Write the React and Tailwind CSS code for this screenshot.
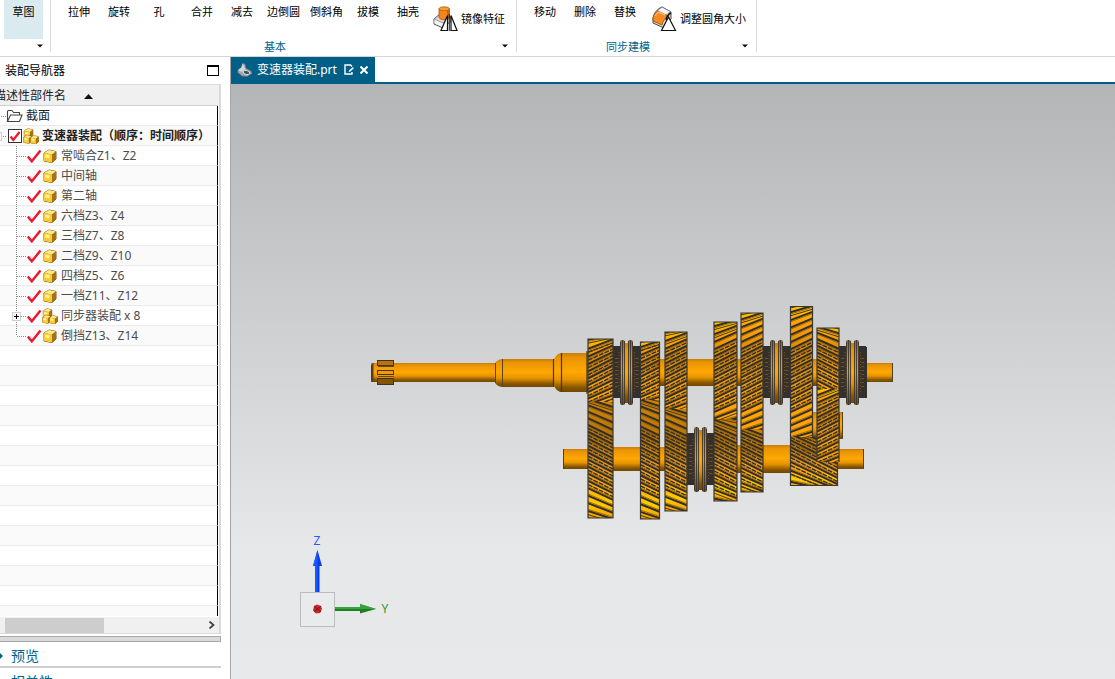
import React from "react";

const FONT = "font-['Noto_Sans','Noto_Sans_CJK_SC',sans-serif]";

/* ---------- icons ---------- */

function Caret({ className = "" }) {
  return (
    <svg width="6" height="4" viewBox="0 0 6 4" className={className} aria-hidden="true">
      <path d="M0 0.5h6L3 3.6z" fill="#111" />
    </svg>
  );
}

function MirrorIcon() {
  return (
    <svg width="26" height="26" viewBox="0 0 26 26" aria-hidden="true">
      <path d="M2 13 9 7l10 4v4l-8 7-9-4z" fill="#dcdcdc" stroke="#555" strokeWidth="1" />
      <path d="M2 13l9 4 8-6" fill="none" stroke="#888" />
      <path d="M2.500 13.500l8.500 4V21l-8.500-3.500z" fill="#f3f3f3" />
      <path d="M7 2.500v9c1 3 9 3 10.500 0v-9z" fill="#f58516" stroke="#a65308" strokeWidth="0.800" />
      <path d="M15 4v9l2.500-1.500v-9z" fill="#c7640a" />
      <ellipse cx="12.200" cy="2.800" rx="5.200" ry="2" fill="#f99b35" stroke="#b5600d" strokeWidth="0.800" />
      <path d="M15.500 9.500v15H9z" fill="#fff" stroke="#111" strokeWidth="1.200" />
      <path d="M19 9.500v15h6z" fill="#fff" stroke="#111" strokeWidth="1.200" />
      <path d="M17.300 8v17" stroke="#111" strokeWidth="0.900" />
    </svg>
  );
}

function FilletIcon() {
  return (
    <svg width="26" height="26" viewBox="0 0 26 26" aria-hidden="true">
      <path d="M2 12C3 7 6 3 11 1l9 5v7l-7 9L2 17z" fill="#d8d8d8" stroke="#4b4b4b" />
      <path d="M11 1l9 5c-3 1-4 2-5 4L6 5z" fill="#f4f4f4" stroke="#666" strokeWidth="0.700" />
      <path d="M2 12c1-3 2-5 5-7l10 5c-3 2-5 5-6 9l-9-4z" fill="#f58a1f" stroke="#9b4c0a" strokeWidth="0.800" />
      <path d="M4 10c1-2 2-3 4-4l6 3" fill="none" stroke="#ffb765" strokeWidth="1.400" />
      <path d="M17.500 11l7 13.500h-14z" fill="#fff" stroke="#111" strokeWidth="1.200" />
      <path d="M15 14q1-5 5-7" fill="none" stroke="#111" strokeWidth="1.500" />
    </svg>
  );
}

function Cube({ x, y, s }) {
  return (
    <g transform={`translate(${x} ${y}) scale(${s})`}>
      <path d="M1 4 6 1l7 1.500V10l-4 3.500L1 12z" fill="#b07d10" stroke="#6f4d06" strokeWidth="0.900" />
      <path d="M1 4l5-3 7 1.500L9 5.500z" fill="#ffe98a" />
      <path d="M1 4l8 1.500v8L1 12z" fill="#fbcb32" />
      <path d="M2.200 5.400l4.300.8v3l-4.300-.8z" fill="#fff0a6" />
      <path d="M9 5.500l4-3V10l-4 3.500z" fill="#a97210" />
    </g>
  );
}

function PartIcon() {
  return (
    <svg width="14" height="14" viewBox="0 0 14 14" aria-hidden="true">
      <Cube x={0} y={0} s={1} />
    </svg>
  );
}

function AssemblyIcon() {
  return (
    <svg width="16" height="16" viewBox="0 0 16 16" aria-hidden="true">
      <Cube x={0.5} y={0} s={0.72} />
      <Cube x={0} y={6.5} s={0.66} />
      <Cube x={7} y={7} s={0.66} />
    </svg>
  );
}

function FolderIcon() {
  return (
    <svg width="17" height="14" viewBox="0 0 17 14" aria-hidden="true">
      <path d="M1.500 12.500V2.500q0-1 1-1h3.500l1.500 2h6v2.500M1.500 12.500l3-6.500H16l-2.500 6.500z" fill="none" stroke="#444" strokeWidth="1.100" />
    </svg>
  );
}

function RedCheck({ boxed }) {
  return boxed ? (
    <svg width="14" height="14" viewBox="0 0 14 14" className="pointer-events-none col-start-1 row-start-1 opacity-0 peer-checked:opacity-100" aria-hidden="true">
      <path d="M2.500 7.500l2.800 3.500L11.500 3" fill="none" stroke="#f5142e" strokeWidth="2.200" />
    </svg>
  ) : (
    <svg width="15" height="14" viewBox="0 0 15 14" className="pointer-events-none col-start-1 row-start-1 opacity-0 peer-checked:opacity-100" aria-hidden="true">
      <path d="M0.800 7.500l4 4.800L13.500 1.500" fill="none" stroke="#f5142e" strokeWidth="2.400" />
    </svg>
  );
}

/* ---------- ribbon ---------- */

function RibbonButton({ children, wide }) {
  return (
    <button className={`${wide ? "w-[43px]" : "w-10"} h-10 shrink-0 pt-1 text-center flex justify-center items-start hover:bg-[#daebf0]`}>
      {children}
    </button>
  );
}

function RibbonGroup({ title, children, className }) {
  return (
    <section className={`flex h-13 shrink-0 flex-col justify-between border-r border-[#d9d9d9] ${className}`}>
      <div className="flex">{children}</div>
      <div className="flex h-3 items-center">
        <h2 className="flex-1 pt-px text-center text-[#00648b]">{title}</h2>
        <button className="flex h-3 w-[17px] items-center pl-[3px]" aria-label={`${title}选项`}>
          <Caret />
        </button>
      </div>
    </section>
  );
}

function Ribbon() {
  return (
    <header className="flex h-[57px] shrink-0 items-start overflow-hidden border-b border-[#d5d5d5] bg-white text-[11px] leading-4 text-black">
      <div className="flex h-13 w-[51px] shrink-0 flex-col justify-between border-r border-[#d9d9d9] pl-1">
        <button className="flex h-[39px] w-[39px] items-start justify-center bg-[#daebf0] pt-1">草图</button>
        <button className="flex h-3 w-[39px] items-center justify-end" aria-label="草图选项">
          <Caret />
        </button>
      </div>
      <RibbonGroup title="基本" className="w-[466px]">
        <div className="flex pl-2">
          <RibbonButton>拉伸</RibbonButton>
          <RibbonButton>旋转</RibbonButton>
          <RibbonButton>孔</RibbonButton>
        </div>
        <div className="flex pl-[3px]">
          <RibbonButton>合并</RibbonButton>
          <RibbonButton>减去</RibbonButton>
          <RibbonButton wide>边倒圆</RibbonButton>
          <RibbonButton wide>倒斜角</RibbonButton>
          <RibbonButton>拔模</RibbonButton>
          <RibbonButton>抽壳</RibbonButton>
        </div>
        <button className="ml-1 flex h-9 items-center gap-[3px] pt-[2px]">
          <MirrorIcon />
          镜像特征
        </button>
      </RibbonGroup>
      <RibbonGroup title="同步建模" className="w-[240px]">
        <div className="flex pl-2">
          <RibbonButton>移动</RibbonButton>
          <RibbonButton>删除</RibbonButton>
          <RibbonButton>替换</RibbonButton>
        </div>
        <button className="ml-[6px] flex h-9 items-center gap-[3px] pt-[2px]">
          <FilletIcon />
          调整圆角大小
        </button>
      </RibbonGroup>
    </header>
  );
}

/* ---------- assembly navigator ---------- */

const PARTS = [
  { name: "常啮合Z1、Z2" },
  { name: "中间轴" },
  { name: "第二轴" },
  { name: "六档Z3、Z4" },
  { name: "三档Z7、Z8" },
  { name: "二档Z9、Z10" },
  { name: "四档Z5、Z6" },
  { name: "一档Z11、Z12" },
  { name: "同步器装配 x 8", assembly: true },
  { name: "倒挡Z13、Z14", last: true },
];

function Row({ children }) {
  return (
    <tr className="even:bg-[#fafafa]">
      <td className="border-b border-[#ebebeb] p-0">
        <div className="flex h-[19px] items-center whitespace-nowrap">{children}</div>
      </td>
    </tr>
  );
}

function Branch({ last, expandable }) {
  return (
    <svg width="27" height="20" viewBox="0 0 27 20" className="-mb-px shrink-0" aria-hidden="true">
      <path d={last ? "M16.500 0v10" : "M16.500 0v20"} stroke="#8a8a8a" strokeDasharray="1 1" />
      <path d="M17 10.500h9" stroke="#8a8a8a" strokeDasharray="1 1" />
      {expandable && (
        <g>
          <rect x="12.500" y="6.500" width="8" height="8" fill="#fff" stroke="#cfcfcf" />
          <path d="M14 10.500h5M16.500 8v5" stroke="#000" />
        </g>
      )}
    </svg>
  );
}

function Navigator() {
  return (
    <aside className="flex w-[231px] shrink-0 flex-col border-r border-[#a5a5a5] bg-white pr-[9px] text-xs">
      <div className="flex h-[27px] shrink-0 items-center justify-between pl-[5px] pr-[2px] text-black">
        <h1>装配导航器</h1>
        <button className="h-[11px] w-3 border border-t-2 border-black" aria-label="最大化" />
      </div>
      <div className="flex min-h-0 flex-1 flex-col border-y border-r-2 border-[#dadada]">
        <div className="min-h-0 flex-1 overflow-hidden bg-[linear-gradient(#f0f0f0_20px,#fff_20px)] pr-px">
          <table className="w-full border-separate border-spacing-0">
            <thead>
              <tr>
                <th className="border-b border-[#cfcfcf] bg-[#f0f0f0] p-0 text-left font-normal text-[#222]">
                  <button className="-ml-[6px] flex h-5 items-center gap-[18px] whitespace-nowrap pt-[2px]">
                    描述性部件名
                    <svg width="9" height="5" viewBox="0 0 9 5" aria-hidden="true">
                      <path d="M0 5 4.500 0 9 5z" fill="#111" />
                    </svg>
                  </button>
                </th>
              </tr>
            </thead>
            <tbody className="[&_td]:border-r [&_td]:border-r-black text-[#4c4c4c]">
              <Row>
                <svg width="6" height="19" viewBox="0 0 6 19" aria-hidden="true">
                  <path d="M1 10.500h5" stroke="#8a8a8a" strokeDasharray="1 1" />
                </svg>
                <FolderIcon />
                <span className="pl-[3px] text-[#222]">截面</span>
              </Row>
              <Row>
                <svg width="8" height="19" viewBox="0 0 8 19" aria-hidden="true">
                  <path d="M0 6.500h1.500v8H0" fill="none" stroke="#cfcfcf" />
                  <path d="M3 10.500h4" stroke="#8a8a8a" strokeDasharray="1 1" />
                </svg>
                <label className="flex items-center font-bold text-[#222]">
                  <span className="grid">
                    <input type="checkbox" defaultChecked className="peer col-start-1 row-start-1 h-[14px] w-[14px] appearance-none border border-[#333] bg-white" />
                    <RedCheck boxed />
                  </span>
                  <span className="pl-px pr-[3px]">
                    <AssemblyIcon />
                  </span>
                  变速器装配（顺序：时间顺序）
                </label>
              </Row>
              {PARTS.map((part) => (
                <Row key={part.name}>
                  <Branch last={part.last} expandable={part.assembly} />
                  <label className="flex items-center">
                    <span className="grid">
                      <input type="checkbox" defaultChecked className="peer col-start-1 row-start-1 h-[14px] w-[15px] appearance-none" />
                      <RedCheck />
                    </span>
                    <span className={`flex w-[19px] ${part.assembly ? "" : "pl-px"}`}>{part.assembly ? <AssemblyIcon /> : <PartIcon />}</span>
                    {part.name}
                  </label>
                </Row>
              ))}
              {Array.from({ length: 40 }, (_, i) => (
                <Row key={i} />
              ))}
            </tbody>
          </table>
        </div>
        <div className="flex h-[17px] shrink-0 items-center justify-between border-t border-white bg-[#f0f0f0] pl-[5px] pr-1">
          <div className="h-[15px] w-[99px] bg-[#cdcdcd]" />
          <button aria-label="向右滚动">
            <svg width="7" height="8" viewBox="0 0 7 8" aria-hidden="true">
              <path d="M1.500 0.500 5.500 4l-4 3.500" fill="none" stroke="#444" strokeWidth="1.800" />
            </svg>
          </button>
        </div>
      </div>
      <div className="mt-[2px] h-[6px] shrink-0 border border-l-0 border-[#a9a9a9] bg-[#dadada]" />
      <div className="h-[37px] shrink-0 overflow-hidden text-sm leading-6 text-[#00648b]">
        {["预览", "相关性"].map((name) => (
          <button key={name} className="flex h-[26px] w-full items-center gap-2 border-b-2 border-[#cfcfcf] pt-1 text-left">
            <svg width="3" height="6" viewBox="0 0 3 6" aria-hidden="true">
              <path d="M0 0l3 3-3 3z" fill="#00648b" />
            </svg>
            {name}
          </button>
        ))}
      </div>
    </aside>
  );
}

/* ---------- gearbox drawing ---------- */

function Shaft({ x1, x2, y1, y2 }) {
  return (
    <rect x={x1} y={y1} width={x2 - x1} height={y2 - y1} fill="url(#shaft)" />
  );
}

/* One toothed face. dir 1 leans "/", dir -1 leans "\"; cy is the gear's axis, r its radius. */
function Teeth({ id, x, w, top, bottom, cy, r, dir, fill }) {
  const teeth = [];
  const line = (key, y, dy, rise, props) =>
    teeth.push(<path key={key} d={`M${x} ${y + dy + rise / 2}L${x + w} ${y + dy - rise / 2}`} {...props} />);
  for (let y = cy - 140; y < bottom + 14; y += 7) {
    if (y < top - 14) continue;
    const near = Math.abs(y - cy);
    const c = Math.sqrt(1 - Math.min(1, near / r) ** 2);
    const rise = w * (0.22 + 0.3 * c) * dir;
    line(`t${y}`, y, 0, rise, { stroke: "#302d2a", strokeWidth: 2 });
    line(`s${y}`, y, y < cy ? 1.7 : -1.7, rise, { stroke: "#8a5a06", strokeWidth: 0.8 });
    if (near <= 30) {
      line(`f${y}`, y, 3.6, rise, { stroke: "#302d2a", strokeWidth: 1.4, strokeDasharray: "5 1" });
    }
    if (near < 11) {
      line(`h${y}`, y, 5.3, rise, { stroke: "#ffc681", strokeWidth: 0.9, strokeDasharray: "2 1" });
    }
    if (near > r - 9) {
      line(`e${y}`, y, 3.5, rise, { stroke: "#4a3a16", strokeWidth: 1 });
    }
  }
  return (
    <g>
      <clipPath id={id}>
        <rect x={x} y={top} width={w} height={bottom - top} />
      </clipPath>
      <g clipPath={`url(#${id})`}>
        <rect x={x} y={top} width={w} height={bottom - top} fill={`url(#${fill})`} />
        {teeth}
      </g>
    </g>
  );
}

function GearPair({ id, x, w, top, mesh, bottom, lowerW = w }) {
  return (
    <g>
      <Teeth id={`${id}a`} x={x} w={w} top={top} bottom={mesh} cy={372} r={372 - top} dir={1} fill="upper" />
      <Teeth id={`${id}b`} x={x} w={lowerW} top={mesh} bottom={bottom} cy={459} r={Math.max(bottom - 459, 459 - mesh)} dir={-1} fill="lower" />
      <path
        d={`M${x} ${top}H${x + w}V${mesh}H${x + lowerW}V${bottom}H${x}Z`}
        fill="none"
        stroke="#3a3733"
        strokeWidth="1.200"
      />
    </g>
  );
}

function Synchronizer({ x, cy, w = 27 }) {
  const m = x + w / 2;
  return (
    <g>
      <rect x={x} y={cy - 26} width={w} height="52" fill="#33302e" />
      <path d={`M${x + 3.500} ${cy - 14}v30M${m + 10.500} ${cy - 14}v30`} stroke="#7b5212" strokeWidth="3" strokeDasharray="1 3" />
      <path d={`M${x + 6} ${cy - 20}v40M${m + 8} ${cy - 20}v40`} stroke="#76501a" strokeWidth="1" strokeDasharray="1 2" />
      <rect x={m - 6.500} y={cy - 32} width="5" height="65" rx="2" fill="url(#ring)" />
      <rect x={m + 1.500} y={cy - 32} width="5" height="65" rx="2" fill="url(#ring)" />
      <path
        d={`M${m - 6} ${cy - 30}v61M${m - 4} ${cy - 32}v65M${m - 2} ${cy - 31}v63M${m + 2} ${cy - 31}v63M${m + 4} ${cy - 32}v65M${m + 6} ${cy - 30}v61`}
        stroke="#3a3733"
        strokeWidth="0.900"
      />
      <rect x={m - 1.5} y={cy - 29} width="3" height="60" fill="url(#shaft)" />
    </g>
  );
}

function Model() {
  return (
    <svg viewBox="231 84 884 595" className="h-full w-full" role="img" aria-label="变速器装配">
      <defs>
        <linearGradient id="shaft" x1="0" y1="0" x2="0" y2="1">
          <stop offset="0" stopColor="#c87e0a" />
          <stop offset="0.120" stopColor="#ea9403" />
          <stop offset="0.480" stopColor="#ffa803" />
          <stop offset="0.680" stopColor="#e69400" />
          <stop offset="0.880" stopColor="#8a5700" />
          <stop offset="1" stopColor="#704700" />
        </linearGradient>
        <linearGradient id="ring" x1="0" y1="0" x2="0" y2="1">
          <stop offset="0" stopColor="#8f6420" />
          <stop offset="0.250" stopColor="#d58b10" />
          <stop offset="0.500" stopColor="#ee9c10" />
          <stop offset="0.750" stopColor="#b0710c" />
          <stop offset="1" stopColor="#6b4710" />
        </linearGradient>
        <linearGradient id="upper" x1="0" y1="0" x2="0" y2="1">
          <stop offset="0" stopColor="#ffc400" />
          <stop offset="0.120" stopColor="#ffa208" />
          <stop offset="0.350" stopColor="#d58806" />
          <stop offset="0.550" stopColor="#e8960a" />
          <stop offset="0.750" stopColor="#ffa408" />
          <stop offset="1" stopColor="#ffa305" />
        </linearGradient>
        <linearGradient id="lower" x1="0" y1="0" x2="0" y2="1">
          <stop offset="0" stopColor="#d08405" />
          <stop offset="0.300" stopColor="#b47306" />
          <stop offset="0.550" stopColor="#ea9818" />
          <stop offset="0.700" stopColor="#ffa50a" />
          <stop offset="0.880" stopColor="#ffcc00" />
          <stop offset="1" stopColor="#f09c00" />
        </linearGradient>
      </defs>

      {/* input shaft */}
      <Shaft x1={371} x2={497} y1={363} y2={382} />
      <path d="M373 363q-2 1-2 4v11q0 3 2 4z" fill="#7b4f07" />
      <path d="M373 363v19M371.500 365v15" stroke="#4a3a22" strokeWidth="1" />
      <rect x="377" y="360" width="17" height="25" fill="url(#shaft)" />
      <g fill="#b97409" stroke="#453518" strokeWidth="1">
        <rect x="377.500" y="360.500" width="16" height="5" />
        <rect x="377.500" y="370.500" width="16" height="4" fill="#ee9a0b" />
        <rect x="377.500" y="378.500" width="16" height="6" fill="#845509" />
      </g>
      <path d="M378 366.500h16M378 376.500h16" stroke="#704700" />
      <path d="M495 363q3-4 8-4h51v28h-51q-5 0-8-4z" fill="url(#shaft)" />
      <path d="M495.500 363v20M502.500 359v28" stroke="#5b4318" strokeWidth="1" />
      <path d="M554 359q3-6 8-6h26v39h-26q-5 0-8-6z" fill="url(#shaft)" />
      <path d="M553.500 359v28M561.500 353v39M587 351v43" stroke="#40351f" strokeWidth="1.200" />

      {/* main shaft */}
      <Shaft x1={613} x2={839} y1={359} y2={386} />
      <Shaft x1={866} x2={893} y1={363} y2={382} />
      <path d="M892.500 363v19" stroke="#50422a" />

      {/* countershaft */}
      <Shaft x1={563} x2={588} y1={449} y2={469} />
      <path d="M563.500 449v20" stroke="#50422a" />
      <Shaft x1={613} x2={665} y1={447} y2={471} />
      <Shaft x1={737} x2={792} y1={445} y2={473} />
      <Shaft x1={838} x2={864} y1={449} y2={469} />
      <path d="M863.500 449v20" stroke="#50422a" />

      {/* reverse idler */}
      <Shaft x1={813} x2={843} y1={412} y2={439} />
      <path d="M842.500 412v27M839.500 414v23" stroke="#50422a" />

      <Synchronizer x={613} cy={372} />
      <Synchronizer x={687} cy={459} />
      <Synchronizer x={763} cy={372} />
      <Synchronizer x={839} cy={372} w={27} />
      <rect x="864" y="347" width="3" height="51" fill="#33302e" />

      <GearPair id="g1" x={588} w={25} top={339} mesh={402} bottom={518} />
      <GearPair id="g2" x={640.5} w={19} top={342} mesh={400} bottom={519} />
      <GearPair id="g3" x={665} w={22} top={332} mesh={409} bottom={511} />
      <GearPair id="g4" x={714} w={23} top={322} mesh={419} bottom={501} />
      <GearPair id="g5" x={741} w={22} top={313} mesh={429} bottom={492} />
      <GearPair id="g6" x={790.5} w={22} top={306.5} mesh={437} bottom={485.5} lowerW={47} />
      <Teeth id="g7a" x={817} w={22} top={328} bottom={389} cy={372} r={44} dir={-1} fill="upper" />
      <Teeth id="g7b" x={817} w={22} top={389} bottom={462} cy={426} r={42} dir={1} fill="upper" />
      <path d="M817 462V328h22v134" fill="none" stroke="#3a3733" strokeWidth="1.200" />

      {/* orientation triad */}
      <rect x="300.500" y="592.500" width="34" height="34" fill="#e9eaeb" stroke="#bcbcbe" />
      <path d="M315 592v-26h-2l4.500-16 4.500 16h-2.500v26z" fill="#0a3cf0" />
      <path d="M315 592v-26h-2l4.500-16v42z" fill="#1f57ff" />
      <path d="M335 607h25v-3l16 5-16 4.500V611h-25z" fill="#1f7d24" />
      <path d="M335 607h25v-3l16 5h-41z" fill="#35a53a" />
      <path d="M314 606l3-1.500 4 1.500 1 3-2 4-4 .5-3-3z" fill="#c4262b" />
      <path d="M314 606l7 6M321 606l-7 6" stroke="#82151a" strokeWidth="1" />
      <text x="317" y="545" textAnchor="middle" fontSize="12" fill="#2a5cf5">Z</text>
      <text x="385" y="613" textAnchor="middle" fontSize="12" fill="#2f9a35">Y</text>
    </svg>
  );
}

function Viewport() {
  return (
    <main className="flex min-w-0 flex-1 flex-col">
      <nav className="flex h-[27px] shrink-0 border-b-2 border-[#005f87] bg-white">
        <div className="flex w-36 items-center bg-[#005f87] pl-[6px] text-xs text-white">
          <svg width="16" height="14" viewBox="0 0 16 14" aria-hidden="true">
            <path d="M5.500 0.500 8 1l1 4.500 5 2.500 1 2.500-5 3-5-.5L.8 9.500 1 7l3.500-2.500z" fill="#a4a9ab" stroke="#6b6f72" strokeWidth="0.700" />
            <path d="M5.500 0.500 4.500 4.500 1 7l4 2 3.500-3z" fill="#d3d6d7" />
            <ellipse cx="9.500" cy="9.500" rx="3.200" ry="2" fill="#33536a" stroke="#e2e2e2" strokeWidth="0.900" transform="rotate(12 9.500 9.500)" />
          </svg>
          <a href="#model" className="pl-1 pr-[7px]">变速器装配.prt</a>
          <svg width="10" height="11" viewBox="0 0 10 11" aria-hidden="true">
            <path d="M8 8v2H1V1h5.500L8 2.500" fill="none" stroke="#fff" strokeWidth="1.400" />
            <path d="M4.500 8l1-2 3.500-3 .8 1.200L6.500 7.500z" fill="#fff" />
          </svg>
          <button className="ml-[6px]" aria-label="关闭">
            <svg width="8" height="8" viewBox="0 0 8 8" aria-hidden="true">
              <path d="M0.500 0.500l7 7M7.500 0.500l-7 7" stroke="#fff" strokeWidth="2" />
            </svg>
          </button>
        </div>
      </nav>
      <div id="model" className="min-h-0 flex-1 bg-[linear-gradient(to_bottom,#b4b5b7_0%,#e5e7e9_77%,#e8e9eb_100%)]">
        <Model />
      </div>
    </main>
  );
}

export default function App() {
  return (
    <div className={`flex h-screen flex-col overflow-hidden bg-white ${FONT}`}>
      <Ribbon />
      <div className="flex min-h-0 flex-1">
        <Navigator />
        <Viewport />
      </div>
    </div>
  );
}
